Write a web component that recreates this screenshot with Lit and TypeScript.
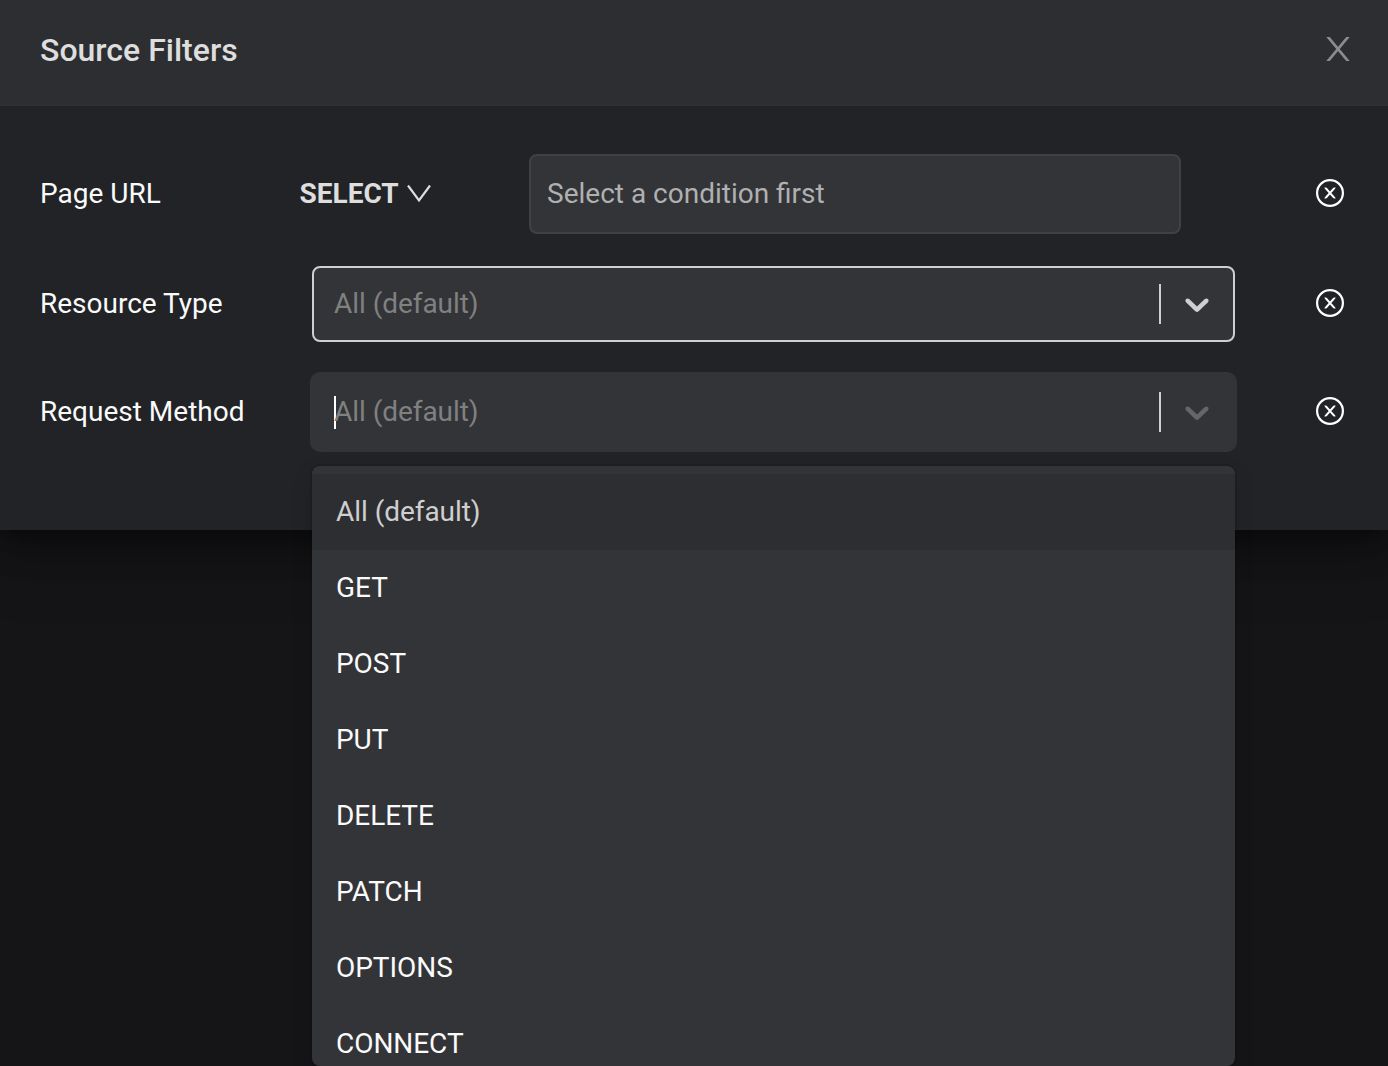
import { LitElement, html, css } from "lit";
import { customElement, property } from "lit/decorators.js";

@customElement("clear-button")
class ClearButton extends LitElement {
  static styles = css`
    :host { display: block; width: 28px; height: 28px; }
    svg { display: block; }
  `;
  render() {
    return html`<svg width="28" height="28" viewBox="0 0 28 28" fill="none" stroke="#fff">
      <circle cx="14" cy="14" r="12.9" stroke-width="2.2" />
      <svg x="8.4" y="8.4" width="11.2" height="11.2" viewBox="8.4 8.4 11.2 11.2">
        <path d="M8.6 7.9L19.4 20.1M19.4 7.9L8.6 20.1" stroke-width="2" />
      </svg>
    </svg>`;
  }
}

@customElement("filter-select")
class FilterSelect extends LitElement {
  @property({ type: Boolean }) focused = false;
  static styles = css`
    :host { display: block; }
    .control {
      box-sizing: border-box;
      height: 76px;
      display: flex;
      align-items: center;
      border: 2px solid #cfcfcf;
      border-radius: 8px;
      background: #333438;
      padding-left: 20px;
      color: #808080;
      letter-spacing: -0.05px;
    }
    .focused { border-color: #333438; box-shadow: 0 0 0 2px #333438; }
    .value { flex: 1; display: flex; align-items: center; }
    .caret { width: 2px; height: 33px; margin-right: -2px; background: #fff; }
    .separator { width: 2px; height: 40px; background: #cfcfcf; }
    svg { display: block; margin: 0 16px; color: #cfcfcf; }
    .focused svg { color: #666; }
  `;
  render() {
    return html`<div class="control ${this.focused ? "focused" : ""}">
      <div class="value">
        ${this.focused ? html`<span class="caret"></span>` : ""}
        <span>All (default)</span>
      </div>
      <span class="separator"></span>
      <svg width="40" height="40" viewBox="0 0 20 20" fill="currentColor">
        <path d="M4.516 7.548c0.436-0.446 1.043-0.481 1.576 0l3.908 3.747 3.908-3.747c0.533-0.481 1.141-0.446 1.574 0 0.436 0.445 0.408 1.197 0 1.615-0.406 0.418-4.695 4.502-4.695 4.502-0.217 0.223-0.502 0.335-0.787 0.335s-0.57-0.112-0.789-0.335c0 0-4.287-4.084-4.695-4.502s-0.436-1.17 0-1.615z" />
      </svg>
    </div>`;
  }
}

const METHODS = ["All (default)", "GET", "POST", "PUT", "DELETE", "PATCH", "OPTIONS", "CONNECT"];

@customElement("app-root")
class AppRoot extends LitElement {
  static styles = css`
    :host {
      display: block;
      height: 1066px;
      overflow: hidden;
      background: #151517;
      color: #fafafa;
      font: 400 28px/44px Roboto, sans-serif;
    }
    .modal {
      height: 530px;
      background: #222326;
      box-shadow: 0 6px 12px -8px rgba(0, 0, 0, 0.48), 0 12px 32px rgba(0, 0, 0, 0.32),
        0 18px 56px 16px rgba(0, 0, 0, 0.2);
    }
    .header {
      box-sizing: border-box;
      height: 106px;
      display: flex;
      align-items: center;
      justify-content: space-between;
      padding: 0 38px 4px 40px;
      border-bottom: 2px solid #303030;
      background: #2d2e31;
    }
    .close { display: block; margin-bottom: 2px; }
    .title { margin: 0; font-size: 32px; font-weight: 500; color: #dedede; }
    .body { display: flex; flex-direction: column; gap: 32px; padding-top: 48px; }
    .row {
      display: grid;
      grid-template-columns: 272px 923px 28px;
      align-items: center;
      padding-left: 40px;
    }
    .row clear-button { margin: 0 0 2px 81px; }
    .condition { display: flex; align-items: center; margin-left: -12.5px; }
    .trigger {
      display: flex;
      align-items: center;
      gap: 8.5px;
      width: 229.5px;
      color: #dedede;
      font-weight: 700;
    }
    .trigger svg { display: block; margin-bottom: 1px; }
    .input {
      box-sizing: border-box;
      width: 652px;
      height: 80px;
      padding: 0 16px;
      display: flex;
      align-items: center;
      border: 2px solid #404145;
      border-radius: 8px;
      background: #333438;
      color: #b0b0b1;
    }
    .anchor { position: relative; }
    .menu {
      position: absolute;
      z-index: 1;
      top: 92px;
      left: 0;
      box-sizing: border-box;
      width: 923px;
      height: 600px;
      padding-top: 8px;
      overflow: hidden;
      border-radius: 8px;
      background: #333438;
      letter-spacing: -0.05px;
      box-shadow: 0 0 0 2px rgba(0, 0, 0, 0.1), 0 8px 22px rgba(0, 0, 0, 0.1);
    }
    .option {
      box-sizing: border-box;
      height: 76px;
      padding: 16px 24px;
    }
    .option.selected { background: #2d2e31; color: #cfcfcf; }
  `;
  render() {
    return html`<div class="modal">
      <div class="header">
        <h1 class="title">Source Filters</h1>
        <svg class="close" width="24" height="24" viewBox="0 0 24 24" fill="none" stroke="#8c8c8d" stroke-width="2.7">
          <path d="M1.2 -1L22.8 25M22.8 -1L1.2 25" />
        </svg>
      </div>
      <div class="body">
        <div class="row">
          <span class="label">Page URL</span>
          <div class="condition">
            <div class="trigger">
              <span>SELECT</span>
              <svg width="24" height="18" viewBox="0 0 24 18" fill="none" stroke="currentColor" stroke-width="2.2">
                <path d="M1 0.5L12 15.5L23 0.5" />
              </svg>
            </div>
            <div class="input">Select a condition first</div>
          </div>
          <clear-button></clear-button>
        </div>
        <div class="row">
          <span class="label">Resource Type</span>
          <filter-select></filter-select>
          <clear-button></clear-button>
        </div>
        <div class="row">
          <span class="label">Request Method</span>
          <div class="anchor">
            <filter-select focused></filter-select>
            <div class="menu">
              ${METHODS.map((m, i) => html`<div class="option ${i === 0 ? "selected" : ""}">${m}</div>`)}
            </div>
          </div>
          <clear-button></clear-button>
        </div>
      </div>
    </div>`;
  }
}
